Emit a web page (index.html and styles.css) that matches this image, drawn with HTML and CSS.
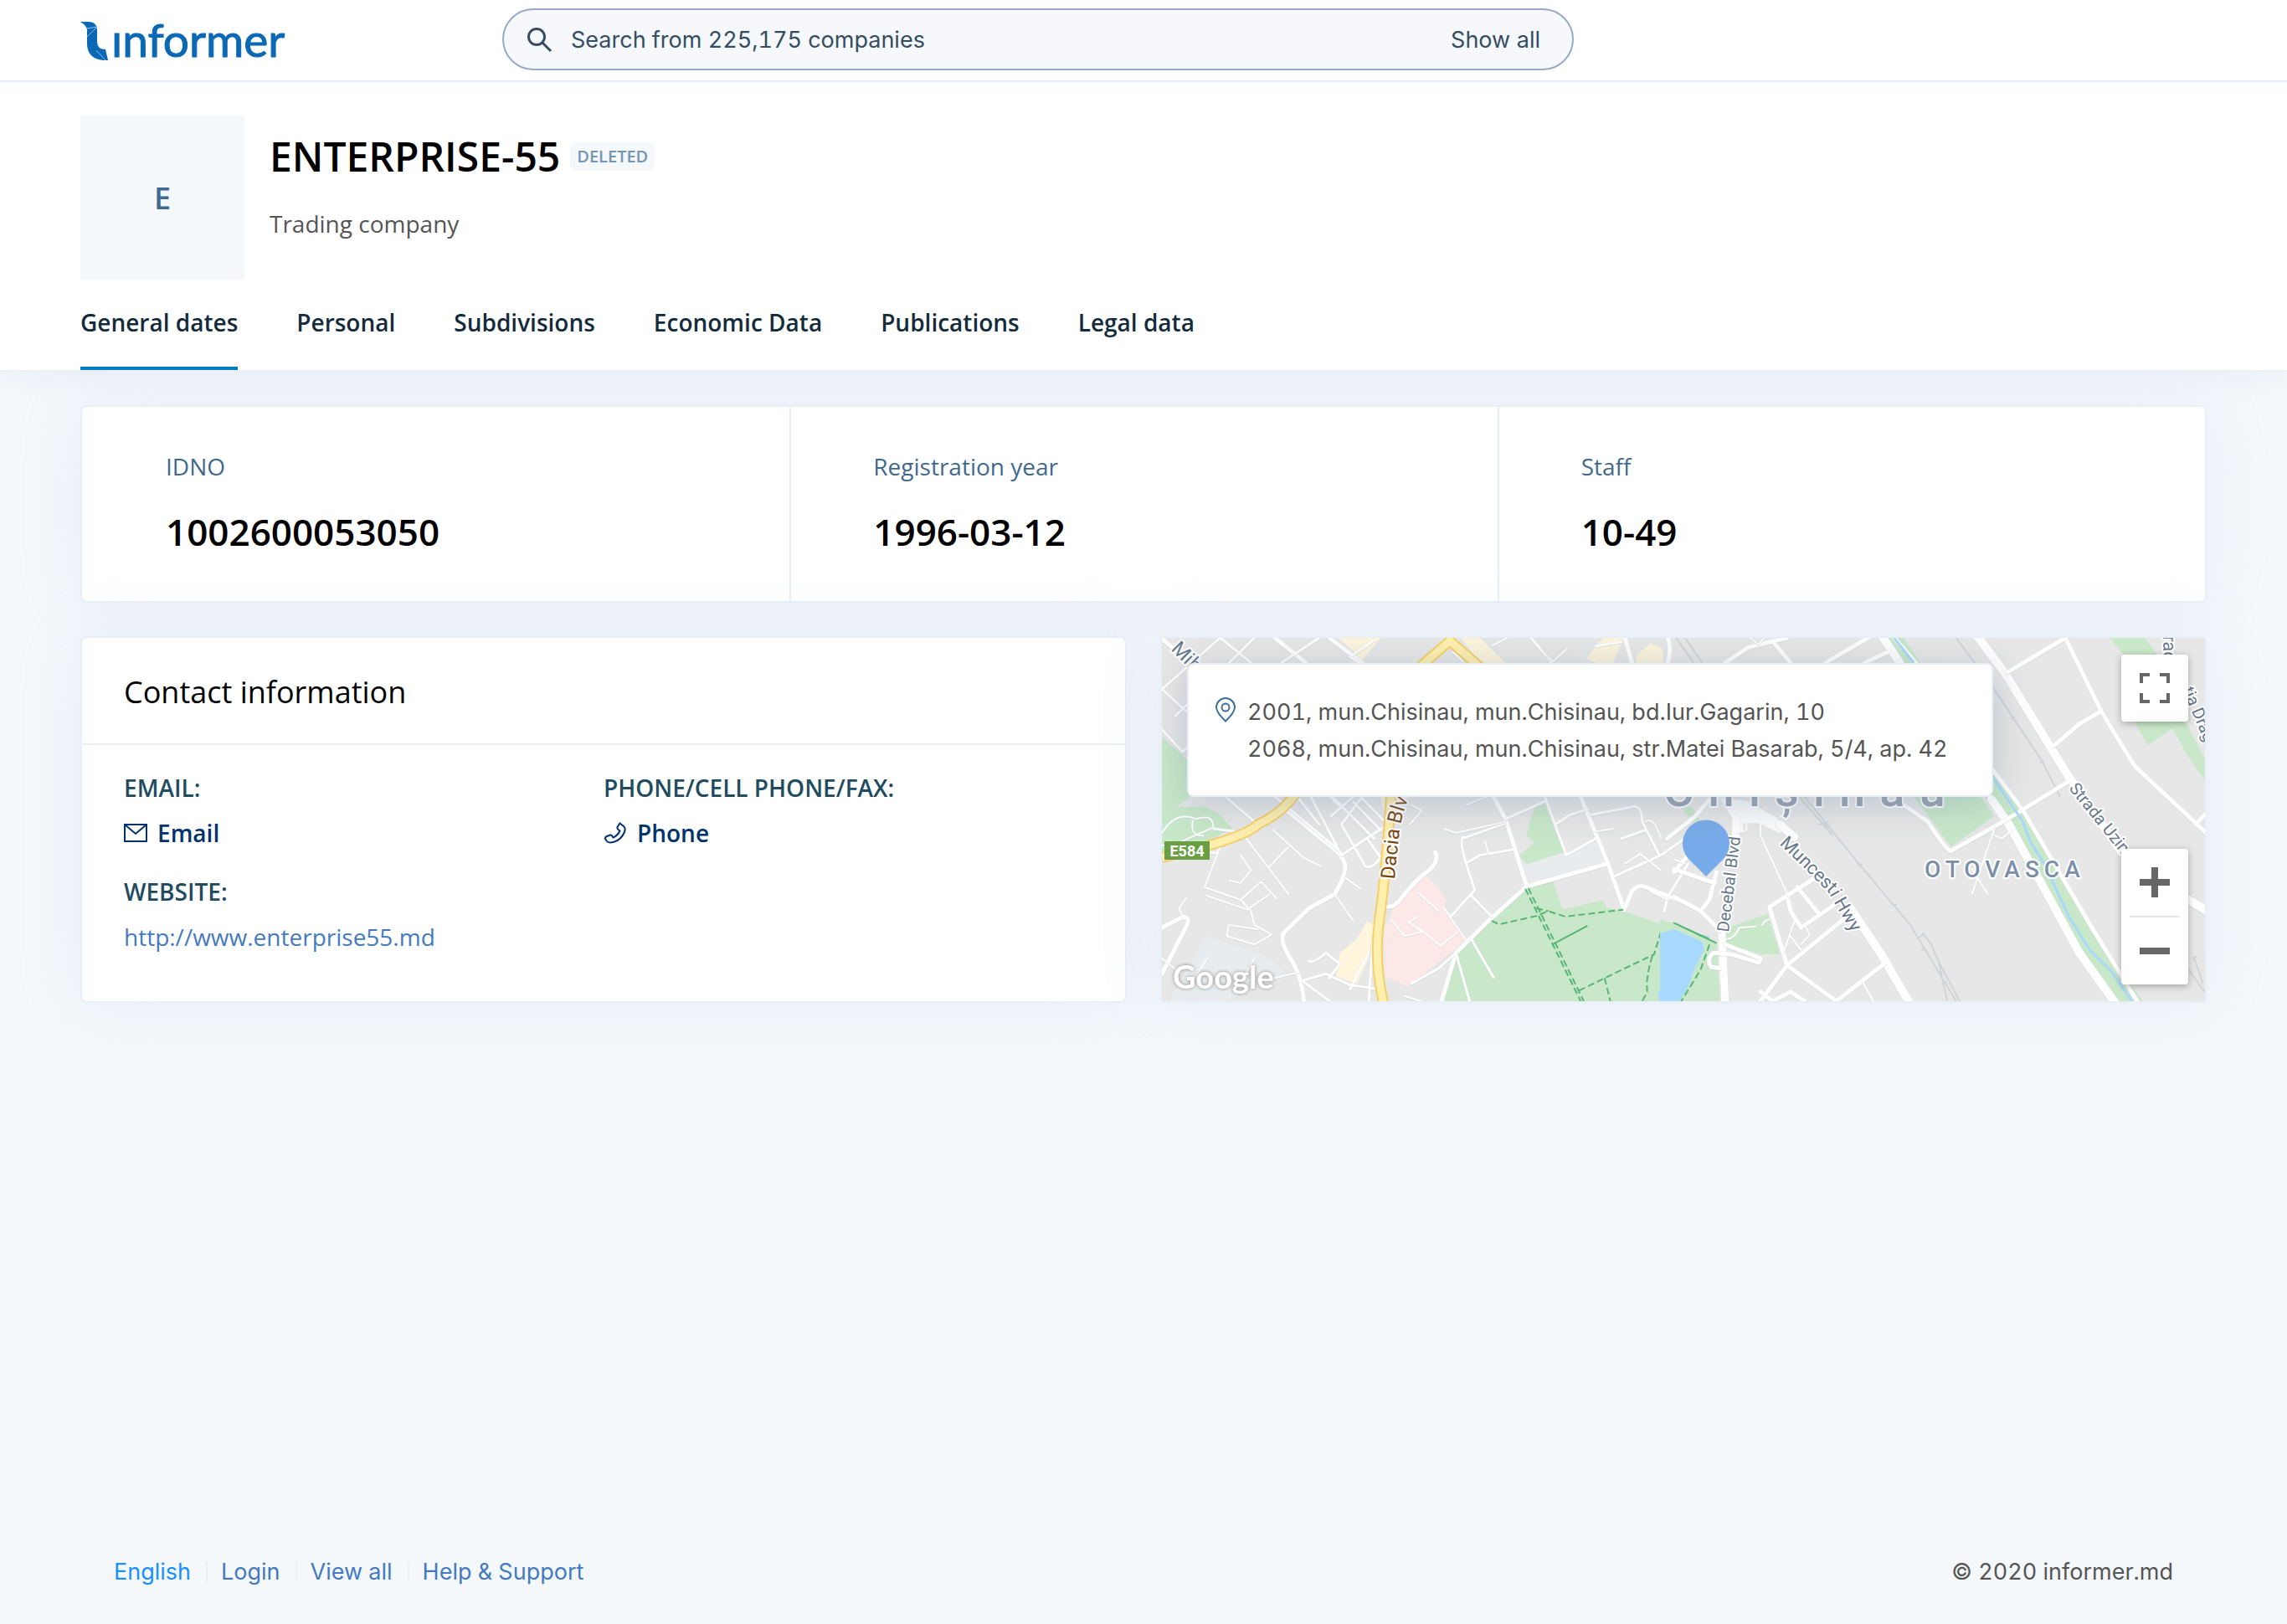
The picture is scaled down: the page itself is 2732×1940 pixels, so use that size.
FILE: index.html
```html
<!DOCTYPE html>
<html lang="en">
<head>
<meta charset="utf-8">
<meta name="viewport" content="width=device-width, initial-scale=1">
<title>ENTERPRISE-55 – informer.md</title>
<link rel="stylesheet" href="styles.css">
</head>
<body>
<header class="topbar">
  <a class="logo" href="#" aria-label="informer">
    <svg class="logo-mark" viewBox="0 0 34 48" aria-hidden="true"><path fill="#0b68b5" d="M0 2H11Q20 3 20 12V26Q20 35 30 35L33 48H27Q8 46 8 28V12Q8 7 0 2Z"/><path fill="none" stroke="#8fbbe0" d="M8 10L20 8M8 20L20 8M19 36L30 48"/></svg>
    <span class="logo-word">ınformer</span>
  </a>
  <form class="search" role="search">
    <svg class="search-icon" viewBox="0 0 30 30" aria-hidden="true"><circle cx="11" cy="11" r="9.500"/><path d="M18 18L28 28"/></svg>
    <input class="search-input" type="text" aria-label="Search companies" placeholder="Search from 225,175 companies">
    <a class="search-all" href="#">Show all</a>
  </form>
</header>

<section class="company">
  <div class="company-head">
    <div class="avatar">E</div>
    <div class="company-info">
      <div class="company-title"><h1 class="company-name">ENTERPRISE-55</h1><span class="badge">DELETED</span></div>
      <p class="company-type">Trading company</p>
    </div>
  </div>
  <nav class="tabs">
    <a class="tab tab-active" href="#">General dates</a>
    <a class="tab" href="#">Personal</a>
    <a class="tab" href="#">Subdivisions</a>
    <a class="tab" href="#">Economic Data</a>
    <a class="tab" href="#">Publications</a>
    <a class="tab" href="#">Legal data</a>
  </nav>
</section>

<main class="content">
  <dl class="card stats">
    <div class="stat"><dt>IDNO</dt><dd>1002600053050</dd></div>
    <div class="stat"><dt>Registration year</dt><dd>1996-03-12</dd></div>
    <div class="stat"><dt>Staff</dt><dd>10-49</dd></div>
  </dl>

  <div class="columns">
    <section class="card contact">
      <h2 class="card-title">Contact information</h2>
      <div class="contact-grid">
        <div class="field">
          <h3 class="field-label">EMAIL:</h3>
          <a class="field-link" href="#"><svg class="field-icon" viewBox="0 0 28 26" aria-hidden="true"><path d="M1 3H27V23H1ZM1 3L14 14L27 3"/></svg>Email</a>
        </div>
        <div class="field">
          <h3 class="field-label">PHONE/CELL PHONE/FAX:</h3>
          <a class="field-link" href="#"><svg class="field-icon" viewBox="0 0 28 26" aria-hidden="true"><path d="M19.500 1.500L24.500 5.500Q26.500 8 25 12Q21 21 13 23.500Q6 25.500 4 23L2 20Q1.500 18 4 17L8 15.500Q9.500 15 10.500 17L11.500 18.500Q17 16 19.500 10.500L17.500 9Q16 7.500 16.500 6Z"/></svg>Phone</a>
        </div>
        <div class="field">
          <h3 class="field-label">WEBSITE:</h3>
          <a class="field-url" href="#">http://www.enterprise55.md</a>
        </div>
      </div>
    </section>

    <section class="card map" aria-label="Map">
      <svg class="map-canvas" viewBox="0 0 1246 434" preserveAspectRatio="xMidYMid slice">
        <defs>
          <path id="dacia" d="M278 289Q283 230 287 215Q293 192 303 172L310 160"/>
          <path id="muncesti" d="M737 246Q776 283 797 305Q808 325 832 366"/>
        </defs>
        <rect width="1246" height="434" fill="#e7e7e7"/>

        <!-- west half -->
        <g class="half" transform="translate(-8 -7) scale(.4082 .3333)">
          <path class="park" d="M20 375L105 470V590L60 628L145 625L190 655L225 705L160 745L20 800Z"/>
          <path class="park" d="M880 1150L985 1020L1087 915L1165 895L1192 995L1310 960L1320 988L1370 1000L1490 1050L1620 1120V1330H840Z"/>
          <path class="park" d="M1110 630L1140 615L1195 790L1088 833L1065 800L1110 755L1085 730Z"/>
          <path class="sand" d="M535 21H660L600 110H575L590 80ZM895 21H950L1025 110H950ZM1290 50L1310 21H1370L1340 110H1290L1262 95ZM1410 80L1450 40L1485 60V110H1405ZM660 590H690V650L665 630ZM540 1150L590 1100L620 1035L640 1050L625 1170L590 1260L530 1235Z"/>
          <path fill="#fce8e6" d="M790 870L825 910L852 965L845 985L910 1105L740 1270L670 1235V1060L700 985Z"/>
          <path fill="#e8ecef" d="M1072 840L1190 792L1290 750L1325 830L1087 905ZM150 1090L320 1160L385 1225L200 1323H40Z"/>
          <path class="water" d="M1495 1090L1520 1065L1620 1090V1323H1475L1470 1295L1490 1270L1480 1190Z"/>
          <path class="road w6" d="M20 25L280 290L395 450L540 620M350 21L440 110M510 21L610 115M1375 21L1395 110M1500 21Q1512 60 1500 110M20 1060L80 1022Q100 1020 95 1045L20 1225M435 1323Q428 1230 395 1170Q365 1110 375 1080L450 990L525 940Q560 870 555 830L540 795L375 630M680 985Q705 985 720 955Q760 890 805 850Q830 820 820 790M990 590L1025 670L1087 912L980 1030L880 1150L838 1323M1087 912L1325 830M1245 590L1325 830L1372 995M1372 995L1395 930Q1410 905 1430 912L1560 975"/>
          <path class="road w4" d="M190 21L280 110M290 21L60 300M190 21L20 205L100 295M20 350L80 430L95 410M480 21L370 110M640 30L570 90L610 120M210 595L290 680M350 590L535 780M455 590L545 800M415 590L480 690M580 590L515 660M600 600L545 690M550 630L640 740M580 610L660 710M600 590L680 690L545 800M545 690L615 840Q635 850 660 810L620 740M900 735Q890 750 910 830L935 925L865 1020M900 740L1025 685M910 828L950 800L1045 780M1025 670L1145 605M1140 590L1170 690L1203 800L1290 740M1170 690L1215 655L1265 635M1275 655L1405 625Q1425 630 1425 680L1475 800M1345 875L1480 800L1550 740M1365 740L1435 710M1490 1000L1500 950L1560 830M925 945L985 1020M880 1150L920 1323M925 1100L990 1238M880 1150L830 1205L750 1260M430 1250L510 1323M430 1250L500 1225L570 1265L645 1278M450 1180Q460 1190 500 1150L540 1190L510 1240M625 1150L570 1280M640 1050L625 1323M1100 21L1160 110M1290 50L1365 35M170 705L235 715M190 760Q190 800 165 790"/>
          <path class="road w2" d="M345 710L435 810L485 840M260 730L390 940M190 770L145 915L250 960L310 895L355 955M250 800L280 855L250 900L215 890M390 770L335 840M150 945L270 995L335 940M250 960L280 1000L290 1050L340 1085L290 1120L210 1090L215 1050L300 1065M525 940L580 1035M555 880L600 920M90 955L70 990L85 1030M845 705L880 720L1025 680M845 990L910 1105M865 1020L845 990M770 935L830 1000M690 1030L730 1090L780 1075L740 1040L770 1020M770 1060L835 1125L885 1075M20 1170L75 1225M100 1270L155 1165M250 1260L290 1170M350 1240L420 1220M750 620L780 640L745 690M985 50L1030 21M1130 70L1165 105L1205 60M870 70L900 105M910 620L970 590M965 750L975 790M1375 830L1420 795L1480 855M1290 715L1340 705M1435 680Q1460 660 1480 740M1450 930L1500 960M730 1305L780 1323M20 720Q60 640 120 670Q170 650 170 700L60 760L20 765M110 675Q100 730 140 730"/>
          <path class="yellow-edge" d="M775 125L862 32L950 125M20 808Q260 740 300 690Q370 650 410 580M690 580Q675 870 655 1040Q640 1180 668 1330"/>
          <path class="yellow" d="M775 125L862 32L950 125M20 808Q260 740 300 690Q370 650 410 580M690 580Q675 870 655 1040Q640 1180 668 1330"/>
          <path class="trail" d="M1083 920L1245 1323M1092 918L1254 1323M985 1035L1005 1048L1115 1018L1150 1000L1200 1020L1370 995M1240 1285L1460 1155L1490 1035M1315 1240L1332 1323M1455 1160Q1435 1240 1440 1290L1425 1323M1115 990L1150 1000M1565 1280L1545 1323"/>
          <path class="trail-solid" d="M1165 1118L1265 1053M1515 1042L1620 1100"/>
        </g>

        <!-- east half -->
        <g class="half" transform="translate(612 -7) scale(.4209 .3333)">
          <path class="park" d="M590 21H650L905 480L1060 790L1190 1080L1330 1323H1250L1090 1040L940 700L780 400ZM1235 21H1335L1370 80L1450 320L1505 450V530L1460 450L1415 345L1345 405L1305 320L1290 100ZM680 590H870L908 660L785 770ZM150 1060L265 1010L300 1155L245 1155L145 1115ZM20 630L50 625L75 680L60 690ZM-40 1030L0 1045L120 1115L130 1323H-40Z"/>
          <path class="water" d="M-40 1080L0 1065L80 1110L85 1140L60 1200L40 1270L15 1323H-40Z"/>
          <path class="rail" d="M800 21L905 200L1045 465L1095 590M370 590L530 840L670 1050L800 1323M355 590L450 730M705 1080L730 1120L750 1180L810 1323M710 1080L690 1100M750 1180L775 1323M5 21L55 110M30 21L80 110M1460 1210L1505 1290M1475 1165L1500 1260"/>
          <path class="rail" d="M955 312L968 305M1038 470L1050 464M520 838L534 832M620 982L632 976M700 1140L714 1134M1470 1168L1484 1162M760 1260L774 1254M410 690L440 680M415 680L435 700"/>
          <path fill="#fbfcfd" d="M130 595L205 605L290 665L320 700L300 720L240 685H195V720H165V665Z"/>
          <path class="road w14" d="M860 15L940 150L1120 520L1270 790M1460 960L1520 1005M590 15L640 110M900 600L950 690L1150 1150L1255 1335M500 990L590 1160L670 1335M300 690L340 735"/>
          <path class="road w12" d="M175 670V730M135 1075L145 1335"/>
          <path class="road w6" d="M620 15L700 130M890 470L990 640L1190 1070L1320 1335M945 145L1110 21L1210 280Q1290 450 1310 485L1510 720M1075 410L1150 330L1210 285M1120 535L940 675L785 785Q770 780 720 680L640 610M1480 690L1505 655M145 110L210 55L320 21M430 110L550 21M280 35L330 110M610 70L540 110M270 985L320 1195L245 1323M320 1195L460 1323L600 1185M320 1195L510 1000M270 985L415 870M320 940L330 1000L360 1060L475 960M350 915L410 1010M245 1290L280 1323L330 1290L370 1323M-20 740L60 660L100 600M0 860L40 800M0 950L75 1000L130 1070M75 1000L100 960L120 860M0 850L115 900M145 1120L245 1170L240 1185L160 1155L110 1150Q90 1175 105 1200L130 1205"/>
          <path class="road w2" d="M205 680V710L180 720M245 680V730L325 950M300 665L340 610M910 700L845 940M845 850L890 940M910 730L930 740L960 710M340 1040L310 1150M330 1090L360 1140M370 1050L385 1085L360 1120M535 1255L565 1323M215 21L240 45L255 21M150 1100Q170 1100 185 1060L230 1055M250 1050Q255 1035 270 1030M0 815L30 830"/>
          <path fill="none" stroke="#a8d9fb" stroke-width="3" d="M620 15L680 110M900 515L990 680L1010 750L1050 830L1120 1020L1180 1140L1240 1215L1305 1335"/>
          <path class="trail" d="M100 1120L75 1210L20 1323"/>
          <path class="trail-solid" d="M0 1043L120 1115"/>
        </g>

        <g class="street">
          <text transform="translate(10 14) rotate(45)">Mih</text>
          <text class="brown"><textPath href="#dacia">Dacia Blvd</textPath></text>
          <text class="s22"><textPath href="#muncesti">Muncesti Hwy</textPath></text>
          <text class="s20" transform="translate(677 352) rotate(-83)">Decebal Blvd</text>
          <text class="s20" transform="translate(1083 180) rotate(51)">Strada Uzin</text>
          <text class="s22" transform="translate(1196 -10) rotate(90)">trad</text>
          <text class="s20" transform="translate(1219 62) rotate(67)">ția Drag</text>
        </g>
        <text class="city" x="599" y="201">Chișinău</text>
        <text class="district" x="911" y="286">OTOVASCA</text>
        <rect x="3" y="243" width="54" height="22" fill="#6a9f43"/>
        <text class="route" x="30" y="261">E584</text>
        <path fill="#78abea" d="M650 285L629 264A28 28 0 1 1 671 264Z"/>
        <text class="google" x="13" y="419">Google</text>
      </svg>
      <div class="address">
        <svg class="pin" viewBox="0 0 24 30" aria-hidden="true"><path d="M12 28.500Q1 18 1 12A11 11 0 0 1 23 12Q23 18 12 28.500Z"/><circle cx="12" cy="12" r="4.500"/></svg>
        <p class="address-text">2001, mun.Chisinau, mun.Chisinau, bd.Iur.Gagarin, 10<br>2068, mun.Chisinau, mun.Chisinau, str.Matei Basarab, 5/4, ap. 42</p>
      </div>
      <div class="controls">
        <button class="control" type="button" aria-label="Toggle fullscreen"><svg viewBox="0 0 36 36"><path d="M0 0H12V4H4V12H0ZM24 0H36V12H32V4H24ZM0 24H4V32H12V36H0ZM32 24H36V36H24V32H32Z"/></svg></button>
        <div class="zoom">
          <button class="control" type="button" aria-label="Zoom in"><svg viewBox="0 0 36 36"><path d="M14 0H22V14H36V22H22V36H14V22H0V14H14Z"/></svg></button>
          <button class="control" type="button" aria-label="Zoom out"><svg viewBox="0 0 36 36"><path d="M0 14H36V22H0Z"/></svg></button>
        </div>
      </div>
    </section>
  </div>
</main>

<footer class="footer">
  <nav class="footer-links">
    <a class="current" href="#">English</a>
    <a href="#">Login</a>
    <a href="#">View all</a>
    <a href="#">Help &amp; Support</a>
  </nav>
  <span>© 2020 informer.md</span>
</footer>
</body>
</html>
```
FILE: styles.css
```css
* { box-sizing: border-box; }
body {
  margin: 0;
  min-height: 100vh;
  display: flex;
  flex-direction: column;
  background: #f4f8fb;
  font-family: "Open Sans", sans-serif;
  font-size: 28px;
  line-height: 40px;
  color: #000;
}
h1, h2, h3, p, dl, dd { margin: 0; }
a { text-decoration: none; }

/* top bar */
.topbar {
  display: flex;
  align-items: flex-start;
  padding: 10px 96px 12px;
  background: #fff;
  border-bottom: 2px solid #e4edf9;
}
.logo {
  display: flex;
  flex: 0 0 504px;
  padding-top: 14px;
  color: #0b68b5;
}
.logo-mark { width: 34px; height: 48px; }
.logo-word {
  margin-left: 3px;
  font: 400 55px/46px Lato, sans-serif;
  -webkit-text-stroke: 1px #0b68b5;
}
.search {
  display: flex;
  align-items: center;
  flex: 0 1 1280px;
  height: 74px;
  padding: 2px 38px 0 28px;
  border: 2px solid #96abc4;
  border-radius: 37px;
  background: #f6f8fc;
}
.search-icon {
  width: 30px;
  height: 30px;
  fill: none;
  stroke: #344d63;
  stroke-width: 3;
}
.search-input {
  flex: 1;
  min-width: 0;
  padding: 0 0 0 22px;
  border: 0;
  outline: 0;
  background: none;
  font: 27px/40px Inter, sans-serif;
  font-variant-numeric: tabular-nums;
  color: #344d63;
}
.search-input::placeholder { color: #344d63; opacity: 1; }
.search-all { font-family: Inter, sans-serif; font-size: 27px; color: #344d63; }

/* company heading */
.company {
  position: relative;
  z-index: 1;
  padding: 40px 96px 0;
  background: #fff;
  box-shadow: 0 0 40px rgba(205, 215, 238, .4);
  clip-path: inset(0 0 -60px);
}
.company-head { display: flex; gap: 30px; }
.avatar {
  display: flex;
  align-items: center;
  justify-content: center;
  width: 196px;
  height: 196px;
  padding-top: 2px;
  background: #f4f8fb;
  font-size: 36px;
  font-weight: 600;
  color: #41698f;
}
.company-title { display: flex; align-items: center; gap: 12px; padding-top: 16px; }
.company-name { font-size: 48px; line-height: 66px; font-weight: 600; }
.badge {
  padding: 0 8px;
  border-radius: 8px;
  background: #f4f8fb;
  font-size: 20px;
  line-height: 34px;
  font-weight: 600;
  color: #7496b3;
}
.company-type { margin-top: 27px; color: #555; }
.tabs { display: flex; gap: 70px; margin-top: 31px; }
.tab {
  padding-bottom: 33px;
  border-bottom: 4px solid transparent;
  font-weight: 600;
  color: #142b3b;
}
.tab-active { border-color: #037cc2; }

/* cards */
.content { flex: 1; padding: 42px 96px; }
.card {
  border: 2px solid #e9eff7;
  border-radius: 8px;
  background: #fff;
  box-shadow: 0 0 80px rgba(205, 215, 238, .32);
}
.stats { display: grid; grid-template-columns: repeat(3, 1fr); height: 236px; }
.stat { padding: 51px 100px 0; }
.stat + .stat { padding-left: 98px; border-left: 2px solid #e9eff7; }
.stat dt { color: #41698f; }
.stat dd { margin-top: 28px; font-size: 44px; line-height: 60px; font-weight: 600; }

.columns { display: grid; grid-template-columns: 1fr 1fr; gap: 40px; margin-top: 40px; }
.card-title {
  padding: 41px 50px 37px;
  border-bottom: 2px solid #e9eff7;
  font-size: 36px;
  line-height: 48px;
  font-weight: 400;
}
.contact-grid {
  display: grid;
  grid-template-columns: 1fr 1fr;
  gap: 30px 0;
  padding: 31px 50px 57px;
}
.field-label { font-size: 28px; line-height: 40px; font-weight: 600; color: #214b60; }
.field-link, .field-url { display: flex; align-items: center; margin-top: 14px; }
.field-link { gap: 12px; font-weight: 600; color: #00326e; }
.field-icon { width: 28px; height: 26px; fill: none; stroke: #00326e; stroke-width: 2; }
.field-url { color: #447ac0; }

/* map */
.map { position: relative; overflow: hidden; border-radius: 4px; }
.map-canvas { position: absolute; inset: 0; width: 100%; height: 100%; }
.half path { vector-effect: non-scaling-stroke; }
.park { fill: #c8e8c9; }
.sand { fill: #fdf5dc; }
.water { fill: #a8d9ff; }
.road { fill: none; stroke: #fff; stroke-linecap: round; stroke-linejoin: round; filter: drop-shadow(0 1px 1px #c5c8cc); }
.w2 { stroke-width: 2; }
.w4 { stroke-width: 3; }
.w6 { stroke-width: 5; }
.w12 { stroke-width: 9; }
.w14 { stroke-width: 10; }
.rail { fill: none; stroke: #d0d4d8; stroke-width: 2; }
.yellow-edge { fill: none; stroke: #f6cf68; stroke-width: 13; }
.yellow { fill: none; stroke: #fff0ad; stroke-width: 9; }
.trail { fill: none; stroke: #57b674; stroke-width: 2; stroke-dasharray: 8 4; }
.trail-solid { fill: none; stroke: #57b674; stroke-width: 2; }
.map-canvas text { font-family: Roboto, sans-serif; paint-order: stroke; stroke: #fff; stroke-width: 4px; stroke-linejoin: round; }
.street text { font-size: 24px; fill: #68788a; }
.street .s22 { font-size: 22px; }
.street .s20 { font-size: 20px; }
.street .brown { fill: #7c4611; }
.city { font-size: 56px; font-weight: 500; letter-spacing: 17px; fill: #98a2b0; }
.district { font-size: 28px; font-weight: 500; letter-spacing: 6px; fill: #7b8fa8; }
.map-canvas .route { font-size: 18px; font-weight: 700; fill: #fff; stroke: none; text-anchor: middle; }
.map-canvas .google {
  font: 700 38px Lato, sans-serif;
  fill: #fff;
  stroke: none;
  filter: drop-shadow(0 0 2px #888);
}
.address {
  position: absolute;
  left: 30px;
  top: 30px;
  display: flex;
  gap: 14px;
  padding: 35px 52px 33px 32px;
  border: 2px solid #e9eff5;
  border-radius: 8px;
  background: #fff;
  box-shadow: 0 8px 50px rgba(120, 140, 165, .4);
}
.pin { flex: none; width: 24px; height: 30px; margin-top: 4px; fill: none; stroke: #3f6f9b; stroke-width: 2; }
.address-text {
  font: 27px/44px Inter, sans-serif;
  font-variant-numeric: tabular-nums;
  color: #555;
  white-space: nowrap;
}
.controls {
  position: absolute;
  top: 20px;
  right: 20px;
  bottom: 20px;
  display: flex;
  flex-direction: column;
  justify-content: space-between;
}
.control {
  display: flex;
  align-items: center;
  justify-content: center;
  width: 80px;
  height: 80px;
  padding: 0;
  border: 0;
  border-radius: 4px;
  background: none;
}
.control svg { width: 36px; height: 36px; fill: #666; }
.controls > .control, .zoom {
  background: #fff;
  border-radius: 4px;
  box-shadow: 0 2px 8px rgba(0, 0, 0, .3);
}
.zoom .control + .control { position: relative; margin-top: 2px; }
.zoom .control + .control::before {
  content: "";
  position: absolute;
  top: -2px;
  left: 10px;
  right: 10px;
  height: 2px;
  background: #e6e6e6;
}

/* footer */
.footer {
  display: flex;
  justify-content: space-between;
  padding: 0 136px 42px;
  font-family: Inter, sans-serif;
  font-size: 27px;
  font-variant-numeric: tabular-nums;
  color: #555;
}
.footer-links { display: flex; align-items: center; }
.footer-links a { line-height: 26px; color: #447ac0; }
.footer-links a + a { margin-left: 18px; padding-left: 16px; border-left: 2px solid #edf0f2; }
.footer-links .current { color: #1890ff; }
```
